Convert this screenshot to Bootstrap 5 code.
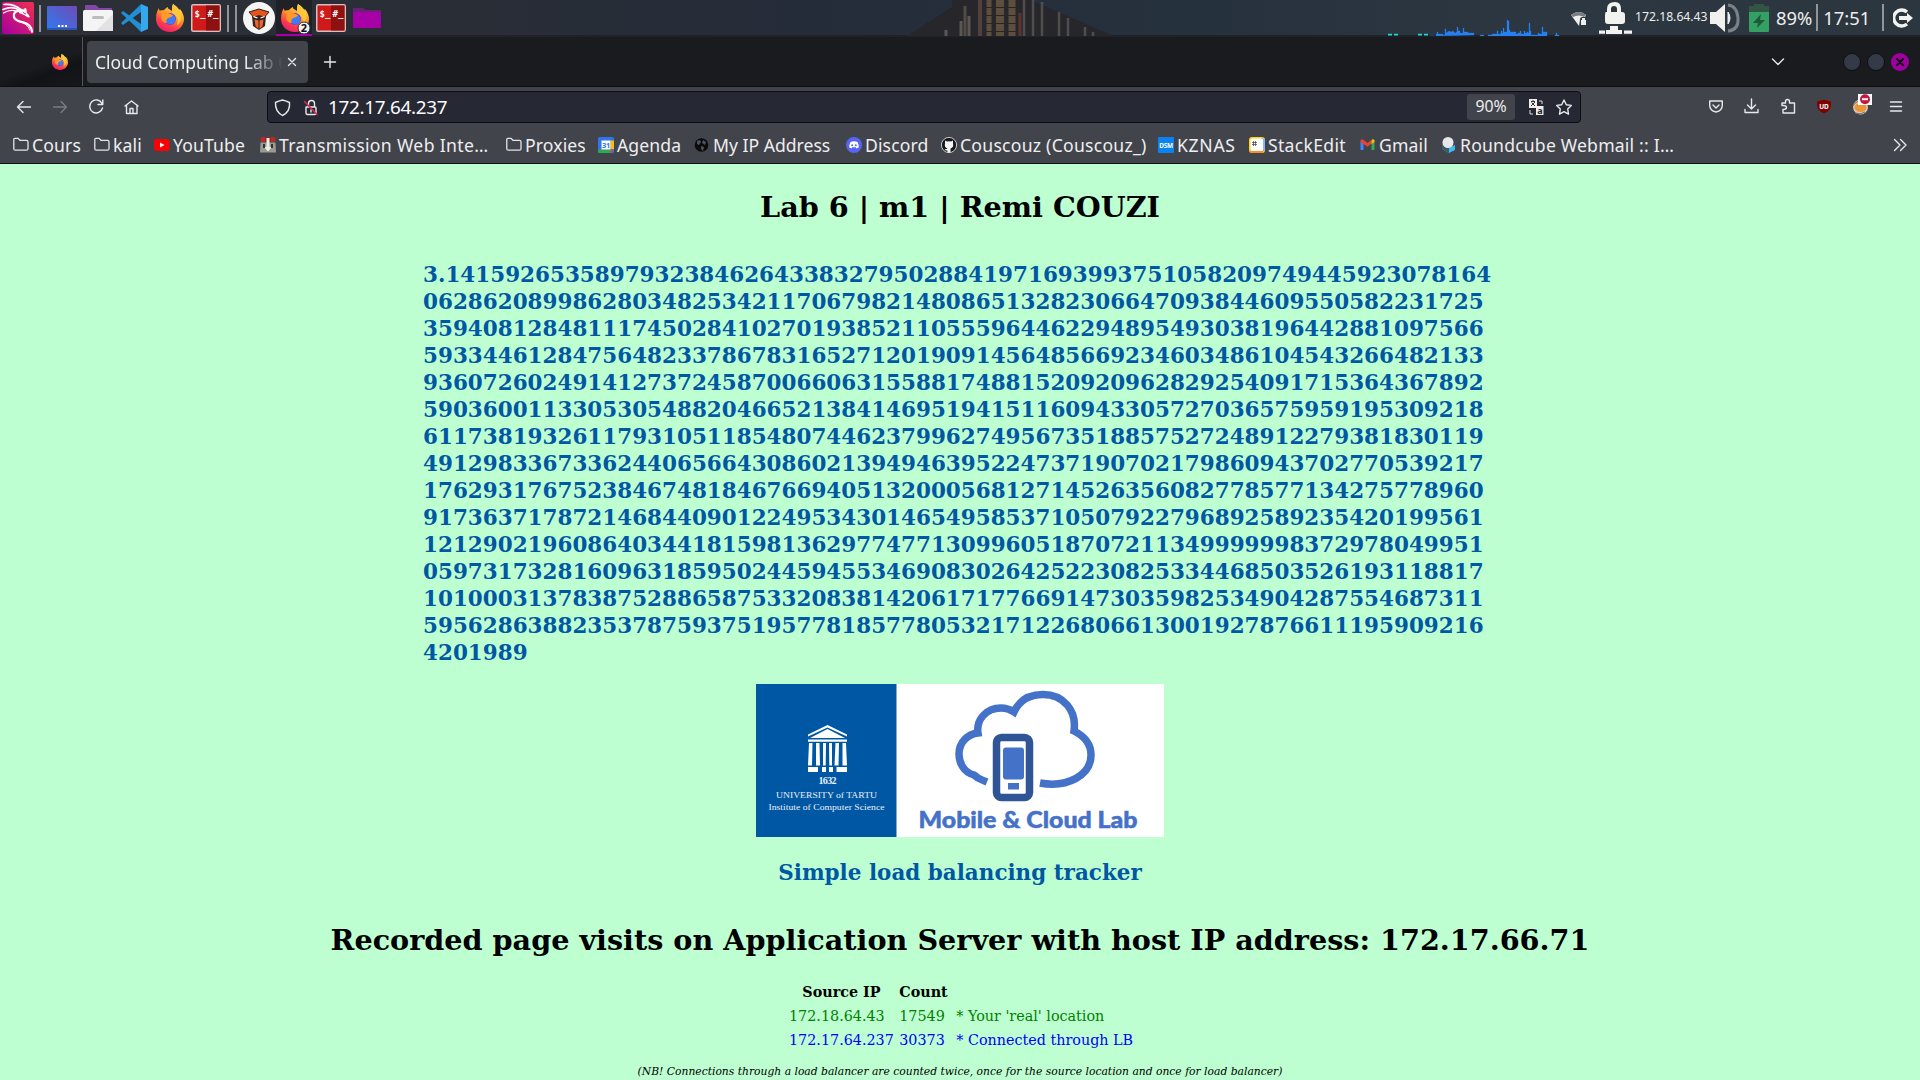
<!DOCTYPE html>
<html lang="en">
<head>
<meta charset="utf-8">
<title>Cloud Computing Lab 6</title>
<link href="https://cdn.jsdelivr.net/npm/bootstrap@5.3.0/dist/css/bootstrap.min.css" rel="stylesheet">
<script src="https://cdn.jsdelivr.net/npm/bootstrap@5.3.0/dist/js/bootstrap.bundle.min.js"></script>
<style>
body{width:1920px;height:1080px;font-family:"Noto Sans",sans-serif;background:#beffd2;color:#eee;line-height:1}
svg{display:block;flex:none}
.panel{height:37px;background:linear-gradient(90deg,#2d3037 0,#282d36 25%,#252c39 42%,#26313e 62%,#2d3741 80%,#2b363f 100%);border-bottom:2px solid #202229}
.panel-left{width:890px}
.panel-mid{width:681px}
.p-ip{font-size:12.2px;width:75px;margin-left:1px;white-space:nowrap;flex:none}
.p-big{font-size:18.4px;padding-top:2px}
.p-batt{margin-left:4px}
.p-clock{margin-left:5px}
.p-end{margin-left:12px}
.vline{width:2px;height:27px;background:#92949a;flex:none}
.tabs-bar{height:50px;background:#1a1b1f;border-bottom:1px solid #0d0e12}
.pinned{width:83px;height:49px;padding-left:52px;border-right:1px solid #55565b;background:linear-gradient(160deg,#1a1b1f 55%,#121317 70%,#17181c)}
.tab-on{width:221px;height:42px;margin-left:4px;background:#42444c;border-radius:4px;padding-left:8px}
.tab-title{font-size:17.5px;width:188px;white-space:nowrap;overflow:hidden;line-height:26px;-webkit-mask-image:linear-gradient(90deg,#000 80%,transparent 100%)}
.new-tab{margin-left:15px}
.win-btns{margin-left:57px;margin-right:10px}
.tool-bar{height:40px;background:#42444c}
.url-box{width:1314px;height:32px;margin-left:127px;background:#262833;border:1px solid #0c0d12;border-radius:4px}
.url-text{font-size:18.9px;letter-spacing:-.3px;width:1139px;margin-left:9px;color:#fbfbfe}
.zoom-pill{width:48px;height:26px;background:#42444c;border-radius:3px;font-size:15.8px}
.marks{height:37px;background:#42444c;border-bottom:1px solid #101115;padding-left:13px;font-size:17.6px;letter-spacing:.12px;white-space:nowrap}
.marks .bm{gap:3px;flex:none}
.bm svg{width:16px;height:16px}
.bm span{padding-top:1px}
.w1{width:81px}.w2{width:60px}.w3{width:106px}.w4{width:246px;letter-spacing:.35px}.w5{width:92px}.w6{width:96px}.w7{width:151px;letter-spacing:0}.w8{width:96px}.w9{width:217px;letter-spacing:.25px}.w10{width:91px;letter-spacing:.7px}.w11{width:110px;letter-spacing:.3px}.w12{width:82px}.w13{width:452px;letter-spacing:.2px}
.w8,.w12{padding-left:1px}
.ic{fill:none;stroke:#e8e8ea;stroke-width:1.4;stroke-linecap:round;stroke-linejoin:round}
.site{font-family:"DejaVu Serif",serif;color:#000;height:916px;overflow:hidden}
.site h1{font-size:28.66px;font-weight:700;line-height:34px;margin:0;white-space:nowrap}
.site h2{font-size:21.47px;font-weight:700;line-height:27px;color:#0057a3;margin:0;white-space:nowrap}
.site h1.who{margin-top:26px}
.site h2.pi{width:1074px;margin:37px auto 0}
.site h2.tracker{margin-top:22px}
.site h1.rec{margin-top:37px}
.logo{margin:18px auto 0}
.visits{font-size:14.33px;line-height:20px;margin:22px 0 0 786px;border-collapse:separate;border-spacing:2px}
.visits td,.visits th{padding:1px;white-space:nowrap}
.c-real{color:#008000}.c-lb{color:#00f}
.note{font-size:10.74px;font-style:italic;line-height:14px;margin-top:12px}
</style>
</head>
<body class="overflow-hidden">
<svg width="0" height="0" class="position-absolute">
<defs>
<linearGradient id="kg" x1="1" y1="0" x2="0" y2="1"><stop offset="0" stop-color="#f0304f"/><stop offset="1" stop-color="#a500a0"/></linearGradient>
<linearGradient id="dg" x1="0" y1="1" x2="1" y2="0"><stop offset="0" stop-color="#2f7bf0"/><stop offset="1" stop-color="#6f4bb8"/></linearGradient>
<linearGradient id="fg" x1=".8" y1="0" x2=".3" y2="1"><stop offset="0" stop-color="#fff04a"/><stop offset=".45" stop-color="#ff9428"/><stop offset=".75" stop-color="#ff3b4e"/><stop offset="1" stop-color="#e5206f"/></linearGradient>
<symbol id="fox" viewBox="0 0 28 28">
<path fill="url(#fg)" d="M17 0c3 2 5 4 6 6 1-1 1-1 1-1 3 4 4 7 4 10 0 7-6 13-14 13S0 22 0 15c0-5 1-8 3-11 0 1 0 2 1 3l4-1c1-1 2-2 4-3 0 1 0 2 1 2l3 2c0-3 0-5 1-7z"/>
<circle cx="14" cy="15" r="6" fill="#6b45d6"/><circle cx="14.500" cy="15.500" r="4.800" fill="#3e7cf5"/>
<path fill="#ff9a2a" d="M3 7c4-1 7 0 9 2l5 2c-1 3-5 2-6 4-1 1-1 3 0 4-5 0-7-5-5-9z"/>
<path fill="#ffc83a" d="M17 0c4 3 9 6 8 14 0 3-2 6-4 7 2-5 0-10-5-12 1-3 0-6 1-9z"/></symbol>
<symbol id="term" viewBox="0 0 30 28"><rect x=".75" y=".75" width="28.500" height="26.500" rx="1.500" fill="#d01a1a" stroke="#d9c0c0" stroke-width="1.500"/><path d="M15 1.500h13.500v25H15z" fill="#8e1111"/><text x="3.500" y="13" font-family="DejaVu Sans Mono" font-weight="700" font-size="9" fill="#fff">$_</text><text x="16.500" y="13" font-family="DejaVu Sans Mono" font-weight="700" font-size="9" fill="#fff">#_</text></symbol>
<symbol id="fold" viewBox="0 0 16 16"><path d="M.8 11.700V2.300q0-1 1-1H5l2 2h6.500q1.500 0 1.500 1.500v6.900q0 1.500-1.500 1.500H2.300Q.8 13.200.8 11.700z" fill="none" stroke="#e4e4e8" stroke-width="1.300"/></symbol>
</defs></svg>

<div class="panel d-flex align-items-center">
<div class="panel-left">
<svg width="390" height="36">
<rect x="276" width="36" height="36" fill="#1f2126"/>
<rect x="2" y="2" width="32" height="32" rx="2" fill="url(#kg)"/>
<g fill="none" stroke="#fff" stroke-linecap="round"><path d="M4 4.500c7-.5 12 1 17 5l5 2.500" stroke-width="1.600"/><path d="M3 9.500c7-3 13-2 17 1" stroke-width="1.600"/><path d="M3.500 13c5-3 9-3 13-2" stroke-width="1.200"/><path d="M21 11c-6-1-8 3-7 6 1 4 6 4.500 10 5.500 5 1.500 7.500 4.500 8 9" stroke-width="2.300"/><path d="M15 19c3 3 7 3 10 5 3 2 4 4 4.500 6" stroke-width="1"/></g><path d="M19 8l5 2 4 4 2 3-2 .5-4-2.500-5-2z" fill="#fff"/><path d="M23 9l3-1 1 4z" fill="#fff"/><path d="M23 12.500l3 1.500" stroke="#d32a68"/>
<path d="M39 5h2v27h-2zM227 5h2v27h-2zM235 5h2v27h-2z" fill="#92949a"/>
<rect x="47" y="6" width="30" height="24" rx="1" fill="url(#dg)"/><path d="M47 29h30" stroke="#254f9c" stroke-width="1.500"/><path d="M58 25h2v2h-2zM61.500 25h2v2h-2zM65 25h2v2h-2z" fill="#fff"/>
<path d="M85 10V6q0-1 1-1h10l3 3h12q1 0 1 1v5H85z" fill="#8147a5"/><rect x="83" y="10" width="30" height="21" rx="1.500" fill="#f4f4f4"/><path d="M113 14v17H96z" fill="#e2e2e2"/><rect x="92" y="16" width="12" height="3" rx="1.500" fill="#bcbcbc"/>
<path d="M141 4v28l-6-6-14-13 2-2 18 13V12L123 25l-2-2 14-13z" fill="#1f8fd6"/><path d="M141 4l7 3v22l-7 3z" fill="#35a7ef"/>
<use href="#fox" x="156" y="4" width="28" height="28"/>
<use href="#term" x="191" y="4" width="30" height="28"/>
<circle cx="259" cy="18" r="16" fill="#f5f5f5"/><path d="M252 16l1 10 6 4 6-4 1-10z" fill="#33241f"/><path d="M249 12l10-3 10 3-3 3.500-1 2-6-2-6 2-1-2z" fill="#e7531c" stroke="#2a211f"/><path d="M254.500 19.500l4 1V29l-3-3zM263.500 19.500l-4 1V29l3-3z" fill="#ef632c"/><path d="M253.500 16.500l4 1.500M264.500 16.500l-4 1.500" stroke="#fff" stroke-width="1.300"/>
<use href="#fox" x="281" y="4" width="28" height="28"/><circle cx="304" cy="28" r="6" fill="#f2f2f2" stroke="#333"/><text x="304" y="32" text-anchor="middle" font-size="11" font-weight="700" fill="#111">2</text>
<path d="M276 34h36v2h-36z" fill="#a800a8"/>
<use href="#term" x="316" y="4" width="30" height="28"/>
<path d="M353 14V9q0-1 1-1h9l3 2h14q1 0 1 1v4z" fill="#6a2077"/><rect x="353" y="12" width="28" height="16" rx="1" fill="#a600a6"/>
</svg></div>
<div class="panel-mid">
<svg width="681" height="36">
<path d="M17 36L62 7V0h78l84 36z" fill="#27262b"/>
<g opacity=".75"><g stroke="#6b6862" stroke-width="3"><path d="M56 36v-6M71 36V21M79 36V16"/></g>
<path d="M75 6v30" stroke="#61594c" stroke-width="3"/><path d="M90 0v36" stroke="#614a40" stroke-width="4"/>
<g stroke="#705c45" stroke-dasharray="7 1"><path d="M99 0v36" stroke-width="5"/><path d="M110 0v36" stroke-width="8"/><path d="M122 0v36" stroke-width="7"/></g><path d="M130 13v23" stroke="#6d3c34" stroke-width="3"/>
<g stroke="#5e5b59" stroke-width="2.500"><path d="M134 0v36M143 0v36M152 2v34M169 12v24M178 18v18M195 27v9M203 32v4"/></g></g>
<path d="M498 34.700h4M504 34.700h4M528 34.700h4M534 34.700h4" stroke="#20d8c4" stroke-width="1.800"/>
<path d="M540 35.500h4M546 36v-2h1v-2h1v2h5v1h2v-6h1v4l3-2 2 1 2-1 2 2h1v-1h1v-5h1v4h2v2h3v-5h1v4h4v1h6v2zM590 36v-1h4v1zM598 36v-1h4v-1h5v-3h1v3h3v-3h1v2h1v-5h1v4h3V20h1v1h1v9h1v2h6v2h2v-1h2v-2h1v3h3v-3h1v2h2v-1h1v1h1V23h1v8h1v4h7v-2h1v1h3v-7h1v5h4v4zM665 36v-1h1v-2h1v2h2v1z" fill="#2680f5" stroke="#2680f5" stroke-width=".3"/>
</svg></div>
<svg width="63" height="36"><path d="M0 15q8-6 15 0l-1 2h-3q-2 0-2 3l-1 6z" fill="#eee"/><path d="M0 15q8-6 15 0l-2 2q-5-3-11 0z" fill="#777c82"/><path d="M10 20h5v5h-5zM11 20v-2h3v2" fill="#eee"/>
<g transform="translate(1 0)"><path d="M34 12h1V9q0-7 8-7 6 0 6 7v3h1q3 0 3 3v6q0 3-3 3H36q-3 0-3-3v-6q0-3 1-3zM39 12h6V9q0-3-3-3t-3 3z" fill="#f2f2ef" fill-rule="evenodd"/><path d="M38 26h8v4h4v4H34v-4h4zM27 30.500h6v3.300h-6zM52 30.500h8v3.300h-8z" fill="#f2f2ef"/></g></svg>
<span class="p-ip">172.18.64.43</span>
<svg width="62" height="36"><path d="M0 12h6l9-8v28l-9-8H0z" fill="#f0f0ed"/><path d="M18 12q4 6 0 12z" fill="#eee" stroke="#eee"/><path d="M18 5q9 1 10 13t-10 13" stroke="#7a8086" stroke-width="3" fill="none"/><path d="M39 12h20v19q0 1-1 1H40q-1 0-1-1z" fill="#35a064"/><path d="M39 12V6h5V4h10v2h5v6z" fill="#315646"/><path d="M51 14l-8 9h5l-1 5 8-8h-5z" fill="#1e5b3b"/></svg>
<span class="p-big p-batt">89%</span>
<span class="vline ms-1"></span>
<span class="p-big p-clock">17:51</span>
<span class="vline p-end"></span>
<svg class="ms-auto" width="27" height="20"><path d="M14 4A8 8 0 1 0 14 16" fill="none" stroke="#f2f2f0" stroke-width="3.400"/><path d="M6 8h8V5l6 5-6 5v-3H6z" fill="#f2f2f0"/></svg>
</div>

<div class="tabs-bar d-flex align-items-center">
<div class="pinned d-flex align-items-center"><svg width="16" height="16"><use href="#fox" width="16" height="16"/></svg></div>
<div class="tab-on d-flex align-items-center"><span class="tab-title">Cloud Computing Lab 6</span><svg class="ms-1" width="10" height="10"><path class="ic" d="M1.500 1.500l7 7M8.500 1.500l-7 7" stroke-width="1.100"/></svg></div>
<svg class="new-tab" width="14" height="14"><path class="ic" d="M7 1.500v11M1.500 7h11"/></svg>
<svg class="ms-auto" width="14" height="10"><path class="ic" d="M1.500 2l5.500 5.500L12.500 2"/></svg>
<svg class="win-btns" width="68" height="20"><g fill="#343a47" stroke="#0e0f13"><circle cx="10" cy="10" r="8.500"/><circle cx="34" cy="10" r="8.500"/></g><circle cx="58" cy="10" r="9" fill="#a000a0"/><path d="M55 7l6 6M61 7l-6 6" stroke="#141018" stroke-width="2.300" stroke-linecap="round"/></svg>
</div>

<div class="tool-bar d-flex align-items-center">
<svg width="140" height="36"><g class="ic"><path d="M30.500 18H17.500M23 12.500L17.500 18l5.500 5.500"/><path stroke="#797a82" d="M53.500 18h13M61 12.500l5.500 5.500-5.500 5.500"/><path d="M102 14.500A6.500 6.500 0 1 0 102.500 19M102.800 11v4.500H98"/><path d="M125 17l6.500-5 6.500 5M126.500 16v8.500H137V16M130 24v-4.500h3V24"/></g></svg>
<div class="url-box d-flex align-items-center">
<svg width="51" height="30"><g class="ic" transform="translate(1 0)"><path d="M13.500 8q4 1 7 2.500 1 9-7 13-7.500-4-7-13 3-1.500 7-2.500z"/><path d="M37.500 15h8.500q1 0 1 1v5q0 1.500-1.500 1.500h-7q-1.500 0-1.500-1.500v-6zM39.500 15v-3.500a3 3 0 0 1 6 0V15M42 18v2"/><path d="M35.500 9.500l12.500 13" stroke="#e22850" stroke-width="1.500"/></g></svg>
<span class="url-text">172.17.64.237</span>
<span class="zoom-pill d-flex align-items-center justify-content-center">90%</span>
<svg class="ms-auto" width="53" height="30"><path d="M2 7h8v9H2zM9 14h7.500v9H9z" fill="#eee"/><path d="M4 9.500h4M6 8v1.500M8 10l-4 4M4.500 10.500L8 14" stroke="#333" fill="none"/><text x="10.200" y="21.500" font-size="9" font-weight="700" fill="#222">a</text><path d="M12 9h3V12M3 18v4h3" fill="none" stroke="#ddd"/><path class="ic" d="M37 8l2.300 4.700 5 .7-3.600 3.600.8 5.200-4.500-2.500-4.500 2.500.8-5.200-3.600-3.600 5-.7z"/></svg>
</div>
<svg class="ms-auto" width="212" height="38"><g class="ic"><path d="M1.700 13h12.600v4q0 6-6.300 7-6.300-1-6.300-7zM5 17l3 3 3-3" /><path d="M43.500 11v9.500M39.500 17l4 4 4-4M37 21.500v3h13v-3"/><path d="M77.500 15v-1.500q0-2 2-2t2 2V15h5v10H75v-3.500q3.500 0 3.500-2t-3.500-2h-1V15z"/></g>
<path d="M116 11.500l7 2q1 9-7 12-8-3-7-12z" fill="#800000"/><text x="116" y="21" font-size="6.500" font-weight="700" text-anchor="middle" fill="#fff">UD</text>
<circle cx="152.500" cy="19" r="7.500" fill="#d9cbb8"/><ellipse cx="152.500" cy="19.500" rx="6" ry="4.500" fill="#eb9538"/><path d="M145 18q3-6 11-5M147 25q6 2 10-1" stroke="#7d6757" fill="none"/>
<rect x="150" y="6" width="14" height="11" fill="#fff"/><circle cx="157" cy="11.200" r="5" fill="#c4173f"/><path d="M154 11.200h6" stroke="#fff" stroke-width="2"/>
<path class="ic" d="M182.500 14h11M182.500 18.500h11M182.500 23h11"/></svg>
</div>

<div class="marks d-flex align-items-center">
<div class="bm w1 d-flex align-items-center"><svg><use href="#fold"/></svg><span>Cours</span></div>
<div class="bm w2 d-flex align-items-center"><svg><use href="#fold"/></svg><span>kali</span></div>
<div class="bm w3 d-flex align-items-center"><svg><rect y="2" width="15.500" height="12" rx="3" fill="#f00"/><path d="M6 5.500l4.500 2.500L6 10.500z" fill="#fff"/></svg><span>YouTube</span></div>
<div class="bm w4 d-flex align-items-center"><svg><path d="M.5 5.500h15l.5 10H0z" fill="#9a9a90"/><path d="M1 0h4v5H.5zM11 0h4l.5 5H11z" fill="#b52a2a"/><path d="M5 .500h6v4H5z" fill="#a51f1f"/><path d="M6.500 1h3v9h2.500L8 14.500 4 10h2.500z" fill="#ecece6"/><path d="M4 7v4M12 7v4" stroke="#282828" stroke-width="1.800"/></svg><span>Transmission Web Inte…</span></div>
<div class="bm w5 d-flex align-items-center"><svg><use href="#fold"/></svg><span>Proxies</span></div>
<div class="bm w6 d-flex align-items-center"><svg><rect width="16" height="16" rx="1.500" fill="#2f75eb"/><path d="M12.500 3.500H16V12h-3.500z" fill="#fbbc04"/><path d="M0 12.500h12.500V16H1.500Q0 16 0 14.500z" fill="#2da94f"/><path d="M12.500 12.500H16L12.500 16z" fill="#ea4335"/><path d="M3.500 3.500h9v9h-9z" fill="#fff"/><text x="8" y="11" text-anchor="middle" font-size="7.500" font-weight="700" fill="#2f75eb" letter-spacing="-.3">31</text></svg><span>Agenda</span></div>
<div class="bm w7 d-flex align-items-center"><svg><circle cx="7.500" cy="8" r="6.800" fill="#0b0b0c"/><path d="M3 4l3-1 1 2-2 3-2-1zM9 3l3 2-1 3-3-2zM7 9l3 1-1 4-2-2z" fill="#50525a"/></svg><span>My IP Address</span></div>
<div class="bm w8 d-flex align-items-center"><svg><circle cx="8" cy="8" r="8" fill="#5865f2"/><path d="M4.500 5q3.500-1.500 7 0 1.500 3 1.300 5.500l-2.300 1-.7-1.200H6.200l-.7 1.200-2.300-1Q3 8 4.500 5z" fill="#fff"/><circle cx="6.200" cy="8.200" r="1" fill="#5865f2"/><circle cx="9.800" cy="8.200" r="1" fill="#5865f2"/></svg><span>Discord</span></div>
<div class="bm w9 d-flex align-items-center"><svg><circle cx="8" cy="8" r="7.600" fill="#17181b" stroke="#eee" stroke-width=".8"/><path d="M4 3.500l2 1q2-.5 4 0l2-1v3q1 4-2.500 5v4h-3v-2q-2 .5-3-1.500 1.500.5 3-.5Q3 10.500 4 6.500z" fill="#f5f5f5"/></svg><span>Couscouz (Couscouz_)</span></div>
<div class="bm w10 d-flex align-items-center"><svg><rect width="16" height="16" rx="1" fill="#0a82f0"/><text x="1.200" y="10.500" font-size="6.400" font-weight="700" fill="#fff" letter-spacing="-.2">DSM</text></svg><span>KZNAS</span></div>
<div class="bm w11 d-flex align-items-center"><svg><rect width="16" height="16" rx="3" fill="#ffd21f"/><path d="M12 1h1q3 0 3 3v9l-3 2z" fill="#7cb9ff"/><path d="M1 12v1q0 3 3 3h9l2-3z" fill="#ff8a20"/><rect x="1.500" y="1.500" width="12.500" height="12.500" rx="1.500" fill="#fff"/><path d="M4.500 4v5M6.500 4v5M3 5.500h5M3 7.500h5" stroke="#555" stroke-width=".8"/></svg><span>StackEdit</span></div>
<div class="bm w12 d-flex align-items-center"><svg><path d="M.5 4v9H3.500V7z" fill="#4285f4"/><path d="M11.500 6v7h3V4z" fill="#34a853"/><path d="M.5 5V3.500q1-2 3-.5l4 3 4-3v3.500l-4 3.200z" fill="#ea4335"/><path d="M11.500 3q2-1.500 3 .5V5l-3 2z" fill="#fbbc04"/></svg><span>Gmail</span></div>
<div class="bm w13 d-flex align-items-center"><svg><path d="M1 7l7 4 6-3v5l-6 3-7-4z" fill="#3dbaf5"/><path d="M1 7l7 4v5l-7-4z" fill="#385c68"/><circle cx="7" cy="5.500" r="5.500" fill="#e8e8e8"/></svg><span>Roundcube Webmail :: I…</span></div>
<svg width="15" height="14"><path class="ic" d="M1.500 1.500L7 7l-5.500 5.500M7.500 1.500L13 7l-5.500 5.500"/></svg>
</div>

<main class="site">
<h1 class="who text-center">Lab 6 | m1 | Remi COUZI</h1>
<h2 class="pi">3.1415926535897932384626433832795028841971693993751058209749445923078164<br>06286208998628034825342117067982148086513282306647093844609550582231725<br>35940812848111745028410270193852110555964462294895493038196442881097566<br>59334461284756482337867831652712019091456485669234603486104543266482133<br>93607260249141273724587006606315588174881520920962829254091715364367892<br>59036001133053054882046652138414695194151160943305727036575959195309218<br>61173819326117931051185480744623799627495673518857527248912279381830119<br>49129833673362440656643086021394946395224737190702179860943702770539217<br>17629317675238467481846766940513200056812714526356082778577134275778960<br>91736371787214684409012249534301465495853710507922796892589235420199561<br>12129021960864034418159813629774771309960518707211349999998372978049951<br>05973173281609631859502445945534690830264252230825334468503526193118817<br>10100031378387528865875332083814206171776691473035982534904287554687311<br>59562863882353787593751957781857780532171226806613001927876611195909216<br>4201989</h2>
<svg class="logo" width="408" height="153">
<path fill="#fff" d="M0 0h408v153H0z"/><path fill="#0057a3" d="M0 0h140.500v153H0z"/>
<g fill="#fff"><path d="M52 50.500L71.500 41 91 50.500v2L71.500 43.500 52 52.500z"/><path d="M54 54l17.500-9L89 54zM52 55.500h39v2.300H52zM53 59h3.500l-.5 22.500h-4zM60 59h3.500l.5 22.500h-4zM67 59h3l-.3 22.500H67zM73 59h3v22.500h-2.700zM79.500 59H83l-.5 22.500h-4zM86.500 59H90l1 22.500h-4.500zM52 83h10v5H52zM66 83h4v5h-4zM73 83h4v5h-4zM80.500 83H91v5H80.500z"/></g>
<g fill="#e8f1fa" font-family="Liberation Serif" text-anchor="middle"><text x="71.500" y="100" font-size="10" font-weight="700" textLength="18">1632</text><text x="70.500" y="114" font-size="9" textLength="101" lengthAdjust="spacingAndGlyphs">UNIVERSITY of TARTU</text><text x="70.500" y="125.500" font-size="8.800" textLength="116" lengthAdjust="spacingAndGlyphs">Institute of Computer Science</text></g>
<path d="M231 98Q226 96 222 94L218 91C207 88 203 78 203 70C203 58 212 50 222 49C220 36 230 24 245 24C250 24 255 26 258 28C263 17 273 10.500 287 10.500C307 10.500 321 26 318 47C328 52 335 60 335 71C335 91 312 104 284 99" fill="none" stroke="#4472c8" stroke-width="7.500"/>
<rect x="240.500" y="53.500" width="33" height="60" rx="5" fill="#fff" stroke="#2f5597" stroke-width="7.500"/><rect x="247" y="63.500" width="21" height="32" rx="3" fill="#4472c8"/><path d="M252 99h11v6.500h-11z" fill="#4472c8"/>
<text x="162.500" y="144" font-family="Lato" font-weight="900" font-size="22.500" fill="#4472c8" stroke="#4472c8" stroke-width=".5" textLength="219" lengthAdjust="spacingAndGlyphs">Mobile &amp; Cloud Lab</text>
</svg>
<h2 class="tracker text-center">Simple load balancing tracker</h2>
<h1 class="rec text-center">Recorded page visits on Application Server with host IP address: 172.17.66.71</h1>
<table class="visits">
<tr><th class="text-center">Source IP</th><th>&hairsp;Count</th><th></th></tr>
<tr class="c-real"><td>172.18.64.43</td><td>&hairsp;17549</td><td>&nbsp;* Your 'real' location</td></tr>
<tr class="c-lb"><td>172.17.64.237</td><td>&hairsp;30373</td><td>&nbsp;* Connected through LB</td></tr>
</table>
<div class="note text-center">(NB! Connections through a load balancer are counted twice, once for the source location and once for load balancer)</div>
</main>
</body>
</html>
